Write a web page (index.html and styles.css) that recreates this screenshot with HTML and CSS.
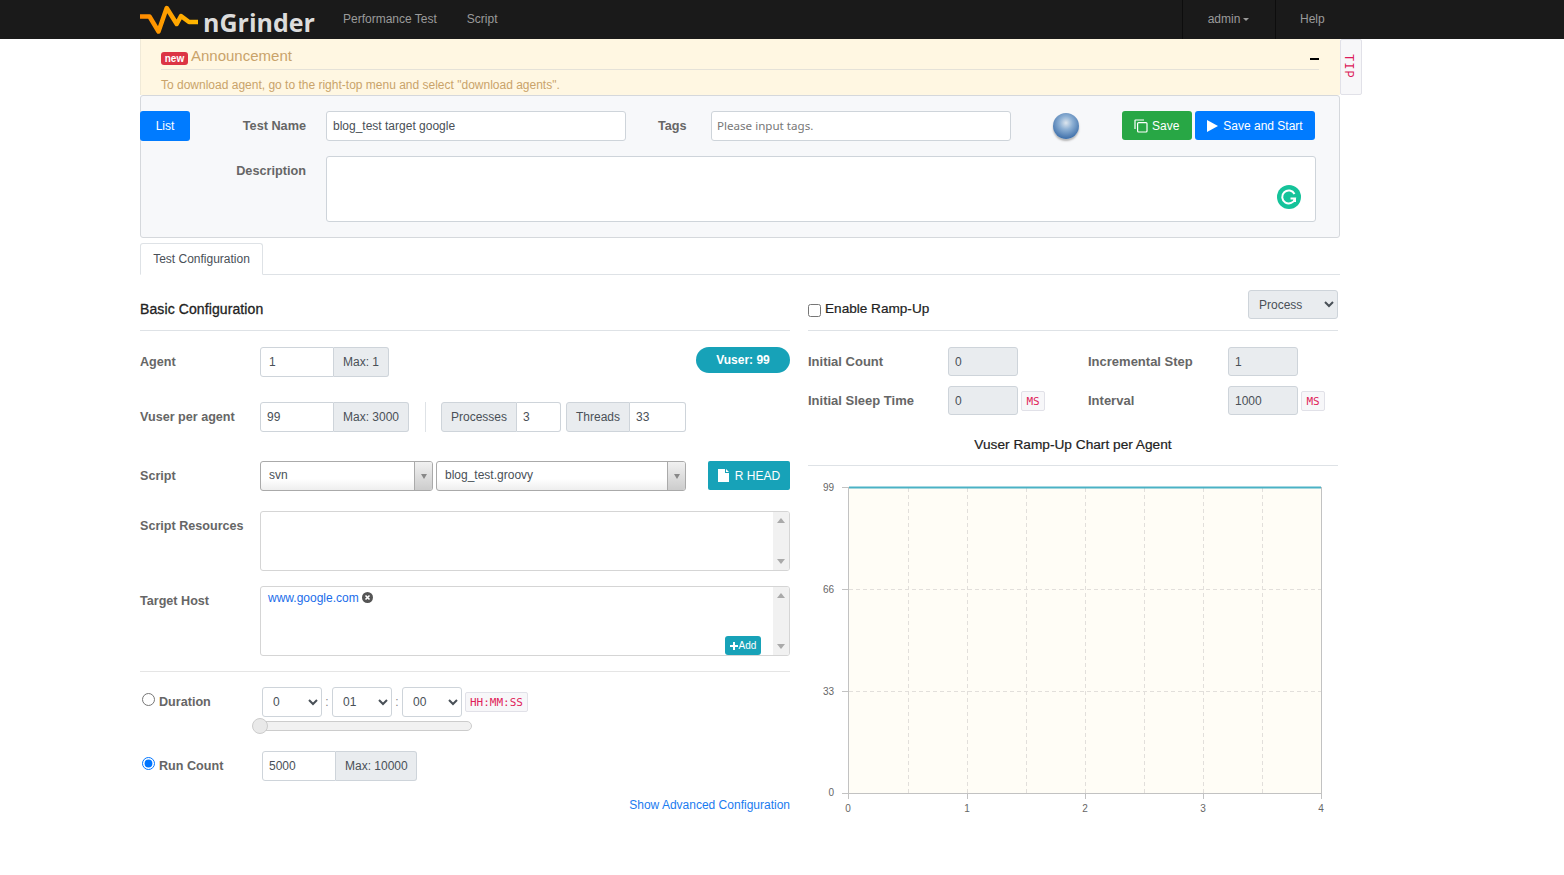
FILE: index.html
```html
<!DOCTYPE html>
<html lang="en">
<head>
<meta charset="utf-8">
<title>nGrinder</title>
<link rel="stylesheet" href="styles.css">
</head>
<body>
<header class="topbar">
  <a class="brand">
    <svg class="brand-mark" width="60" height="39" viewBox="0 0 60 39">
      <defs><linearGradient id="wave" x1="0" x2="1" y1="0" y2="0"><stop offset="0" stop-color="#ff8a00"/><stop offset="1" stop-color="#ffb800"/></linearGradient></defs>
      <path d="M0 16.500H9.500L18.500 31.500 26.700 8 36.700 24 41 16 49 22H58" fill="none" stroke="url(#wave)" stroke-width="4.500" stroke-linejoin="round"/>
    </svg>
    <span class="brand-name">nGrinder</span>
  </a>
  <nav class="nav-left"><a>Performance Test</a><a>Script</a></nav>
  <nav class="nav-right"><a class="nav-user">admin<i class="caret"></i></a><a class="nav-help">Help</a></nav>
</header>

<main class="page">
  <section class="notice">
    <div class="notice-head">
      <span class="badge-new">new</span><span class="notice-title">Announcement</span><span class="notice-min"></span>
    </div>
    <p class="notice-body">To download agent, go to the right-top menu and select "download agents".</p>
    <div class="tip"><span>TIP</span></div>
  </section>

  <section class="well">
    <div class="well-row">
      <button class="btn btn-blue btn-list">List</button>
      <label class="well-label well-label-name">Test Name</label>
      <input class="field field-name" value="blog_test target google">
      <label class="well-label well-label-tags">Tags</label>
      <input class="field field-tags" placeholder="Please input tags.">
      <span class="ball"></span>
      <button class="btn btn-green btn-save"><svg width="14" height="14" viewBox="0 0 14 14"><path d="M1 10V1.500A.5.500 0 0 1 1.500 1H10" fill="none" stroke="#fff" stroke-width="1.200"/><rect x="3.600" y="3.600" width="9.400" height="9.400" rx="1" fill="none" stroke="#fff" stroke-width="1.200"/></svg>Save</button>
      <button class="btn btn-blue btn-start"><svg width="11" height="12" viewBox="0 0 11 12"><path d="M0 0L11 6 0 12Z" fill="#fff"/></svg>Save and Start</button>
    </div>
    <div class="well-row well-row-desc">
      <label class="well-label well-label-desc">Description</label>
      <div class="desc-box">
        <textarea class="desc"></textarea>
        <svg class="grammarly" width="24" height="24" viewBox="0 0 24 24"><circle cx="12" cy="12" r="12" fill="#15c39a"/><path d="M17.500 9A6.500 6.500 0 1 0 18 13.500H13.500" fill="none" stroke="#fff" stroke-width="2"/><path d="M18 13.500V17" stroke="#fff" stroke-width="2"/></svg>
      </div>
    </div>
  </section>

  <div class="tabs"><a class="tab">Test Configuration</a></div>

  <div class="columns">
    <section class="col-left">
      <div class="section-head"><h2>Basic Configuration</h2></div>

      <div class="row row-agent">
        <label class="lbl">Agent</label>
        <div class="group"><input class="gi w74 pl9" value="1"><span class="addon w55">Max: 1</span></div>
        <span class="pill">Vuser: 99</span>
      </div>

      <div class="row row-vuser">
        <label class="lbl">Vuser per agent</label>
        <div class="group"><input class="gi w74" value="99"><span class="addon w75">Max: 3000</span></div>
        <span class="vline"></span>
        <div class="group"><span class="addon addon-first w76">Processes</span><input class="gi gi-last w44" value="3"></div>
        <div class="group group-threads"><span class="addon addon-first w64">Threads</span><input class="gi gi-last w56" value="33"></div>
      </div>

      <div class="row row-script">
        <label class="lbl">Script</label>
        <div class="combo w173"><span>svn</span><i class="combo-arrow"></i></div>
        <div class="combo w250"><span>blog_test.groovy</span><i class="combo-arrow"></i></div>
        <button class="btn btn-teal btn-head"><svg width="11" height="13" viewBox="0 0 11 13"><path d="M0 0H7V4H11V13H0ZM8 0L11 3H8Z" fill="#fff"/></svg>R HEAD</button>
      </div>

      <div class="row row-res">
        <label class="lbl lbl-top">Script Resources</label>
        <div class="listbox h60"><div class="listbody"></div><div class="sb"><i class="sb-up"></i><i class="sb-down"></i></div></div>
      </div>

      <div class="row row-host">
        <label class="lbl lbl-top">Target Host</label>
        <div class="listbox h70">
          <div class="listbody"><a class="hosttag">www.google.com</a><svg class="hostx" width="11" height="11" viewBox="0 0 11 11"><circle cx="5.500" cy="5.500" r="5.500" fill="#555"/><path d="M3.500 3.500L7.500 7.500M7.500 3.500L3.500 7.500" stroke="#fff" stroke-width="1.600"/></svg></div>
          <button class="btn-add"><svg width="8" height="8" viewBox="0 0 8 8"><path d="M3 0H5V3H8V5H5V8H3V5H0V3H3Z" fill="#fff"/></svg>Add</button>
          <div class="sb"><i class="sb-up"></i><i class="sb-down"></i></div>
        </div>
      </div>

      <hr class="rule rule-dur">

      <div class="row row-dur">
        <label class="radio-lbl"><input type="radio" name="mode" class="radio">Duration</label>
        <select class="sel"><option>0</option></select><span class="colon">:</span>
        <select class="sel"><option>01</option></select><span class="colon">:</span>
        <select class="sel"><option>00</option></select>
        <code class="hint hint-hms">HH:MM:SS</code>
      </div>
      <div class="slider"><i class="knob"></i></div>

      <div class="row row-run">
        <label class="radio-lbl"><input type="radio" name="mode" class="radio" checked>Run Count</label>
        <div class="group"><input class="gi w74" value="5000"><span class="addon w81">Max: 10000</span></div>
      </div>

      <div class="adv"><a>Show Advanced Configuration</a></div>
    </section>

    <section class="col-right">
      <div class="section-head head-ramp">
        <label class="ramp-check"><input type="checkbox" class="check">Enable Ramp-Up</label>
        <select class="sel-process"><option>Process</option></select>
      </div>
      <div class="ramp-row ramp-row-1">
        <label class="ramp-lbl">Initial Count</label><input class="ramp-in" value="0" disabled><span class="ramp-gap"></span>
        <label class="ramp-lbl">Incremental Step</label><input class="ramp-in" value="1" disabled>
      </div>
      <div class="ramp-row ramp-row-2">
        <label class="ramp-lbl">Initial Sleep Time</label><input class="ramp-in" value="0" disabled><code class="hint hint-ms">MS</code><span class="ramp-gap ramp-gap-ms"></span>
        <label class="ramp-lbl">Interval</label><input class="ramp-in" value="1000" disabled><code class="hint hint-ms">MS</code>
      </div>
      <h3 class="chart-title">Vuser Ramp-Up Chart per Agent</h3>
      <svg class="chart" width="530" height="350" viewBox="808 475 530 350">
        <rect x="848" y="487" width="473" height="306" fill="#fffdf6"/>
        <g stroke="#e2dfdb" stroke-dasharray="4 3" fill="none">
          <path d="M908.500 488V793M967.500 488V793M1026.500 488V793M1085.500 488V793M1144.500 488V793M1203.500 488V793M1262.500 488V793"/>
          <path d="M849 589.500H1321M849 691.500H1321"/>
        </g>
        <g stroke="#c2c2c2" fill="none">
          <path d="M848.500 487V799M1321.500 487V799M842 793.500H1321M842 487.500H848M842 589.500H848M842 691.500H848"/>
          <path d="M967.500 793V799M1085.500 793V799M1203.500 793V799"/>
        </g>
        <path d="M849 487.500H1321" stroke="#4bb2c5" stroke-width="2" fill="none"/>
        <g class="tick" text-anchor="end">
          <text x="834" y="491">99</text><text x="834" y="593">66</text><text x="834" y="695">33</text><text x="834" y="796">0</text>
        </g>
        <g class="tick" text-anchor="middle">
          <text x="848" y="812">0</text><text x="967" y="812">1</text><text x="1085" y="812">2</text><text x="1203" y="812">3</text><text x="1321" y="812">4</text>
        </g>
      </svg>
    </section>
  </div>
</main>
</body>
</html>
```

FILE: styles.css
```css
* { box-sizing: border-box; }
html, body { margin: 0; padding: 0; background: #fff; }
body { font-family: "Liberation Sans", Arial, sans-serif; font-size: 12px; color: #495057; height: 875px; overflow: hidden; }

.topbar { height: 39px; background: #1a1a1a; display: flex; align-items: stretch; padding-left: 140px; }
.brand { display: flex; align-items: center; width: 203px; }
.brand-mark { flex: none; width: 60px; }
.brand-name { font-family: "Open Sans", sans-serif; font-weight: 700; font-size: 25px; color: #dcdcdc; margin-left: 3px; line-height: 39px; padding-top: 6px; }
.nav-left { display: flex; align-items: center; gap: 30px; color: #9a9a9a; padding-bottom: 1px; }
.nav-right { margin-left: auto; margin-right: 209px; display: flex; color: #9a9a9a; }
.nav-user { width: 94px; border-left: 1px solid #0d0d0d; border-right: 1px solid #0d0d0d; display: flex; align-items: center; justify-content: center; padding-bottom: 1px; padding-right: 1px; }
.nav-help { width: 79px; display: flex; align-items: center; padding-left: 24px; padding-bottom: 1px; }
.caret { border: 3.500px solid transparent; border-top-color: #9a9a9a; border-bottom: 0; margin-left: 3px; }

.page { width: 1200px; margin-left: 140px; }

.notice { position: relative; height: 56px; background: #fff7e2; border-left: 1px solid #f0ead8; padding: 0 21px 0 20px; color: #c9a36a; }
.notice-head { height: 31px; border-bottom: 1px solid #e5e2d8; display: flex; align-items: center; }
.badge-new { background: #dc3545; color: #fff; font-size: 10px; font-weight: 700; border-radius: 3px; width: 27px; height: 13px; line-height: 13px; text-align: center; margin-top: 8px; }
.notice-title { font-size: 15px; margin-left: 3px; margin-top: 3px; }
.notice-min { margin-left: auto; width: 9px; height: 2px; background: #000; margin-top: 9px; }
.notice-body { margin: 8px 0 0; font-size: 12px; line-height: 14px; }
.tip { position: absolute; left: 100%; top: 0; width: 22px; height: 56px; background: #f7f7f9; border: 1px solid #e1e1e8; border-radius: 2px; display: flex; justify-content: center; padding: 14px 6px 0 0; }
.tip span { writing-mode: vertical-rl; font-family: "Liberation Mono", monospace; font-size: 12px; color: #dc1a5a; line-height: 1; letter-spacing: 1px; }

.well { height: 143px; background: #f7f8fa; border: 1px solid #d5d8dc; border-radius: 3px; padding-top: 15px; margin-left: 0; }
.well-row { display: flex; align-items: flex-start; height: 30px; margin-left: -1px; }
.well-row-desc { margin-top: 15px; height: 66px; }
.well-label { font-size: 12.700px; font-weight: 700; color: #666; line-height: 30px; }
.well-label-name { width: 116px; text-align: right; }
.well-label-tags { margin-left: 32px; width: 53px; }
.well-label-desc { text-align: right; width: 166px; }
.field { height: 30px; background: #fff; border: 1px solid #ced4da; border-radius: 3px; font: inherit; color: #495057; padding: 0 6px; }
.field::placeholder { color: #777; font-family: "Noto Sans", sans-serif; font-size: 11.600px; }
.field-name { width: 300px; margin-left: 20px; }
.field-tags { width: 300px; padding-left: 5px; }
.ball { width: 26px; height: 26px; margin: 2px 43px 0 42px; border-radius: 50%; flex: none; background: radial-gradient(circle at 50% 38%, #dde6ee 0, #8db0d4 32%, #3d6ea9 78%, #5a82b8 100%); box-shadow: 0 2px 2px #b5b5b5; }
.btn { border: 0; border-radius: 3px; color: #fff; font: inherit; display: flex; align-items: center; justify-content: center; padding: 0; }
.btn-blue { background: #007bff; }
.btn-green { background: #28a745; }
.btn-teal { background: #17a2b8; }
.btn-list { width: 50px; height: 30px; }
.btn-save { width: 70px; height: 29px; gap: 4px; justify-content: flex-start; padding-left: 12px; }
.btn-start { width: 120px; height: 29px; margin-left: 3px; gap: 5px; }
.desc-box { position: relative; margin-left: 20px; width: 990px; height: 66px; }
.desc { display: block; width: 100%; height: 100%; border: 1px solid #ced4da; border-radius: 3px; background: #fff; resize: none; }
.grammarly { position: absolute; right: 15px; bottom: 13px; }

.tabs { margin-top: 5px; height: 32px; border-bottom: 1px solid #dee2e6; }
.tab { display: block; width: 123px; height: 32px; border: 1px solid #dee2e6; border-bottom-color: #fff; background: #fff; line-height: 30px; text-align: center; border-radius: 3px 3px 0 0; }

.columns { display: flex; gap: 18px; }
.col-left { width: 650px; }
.col-right { width: 530px; }
.section-head { height: 56px; border-bottom: 1px solid #dee2e6; display: flex; align-items: flex-end; }
.section-head h2 { margin: 0 0 11px; font-size: 14px; font-weight: 400; color: #222; -webkit-text-stroke: .3px #222; letter-spacing: .1px; line-height: 20px; }

.row { display: flex; align-items: flex-start; }
.lbl { width: 120px; font-size: 12.600px; font-weight: 700; color: #666; line-height: 30px; flex: none; }
.row-agent { margin-top: 16px; height: 30px; }
.row-vuser { margin-top: 25px; height: 30px; }
.row-script { margin-top: 29px; height: 30px; }
.row-res { margin-top: 20px; height: 60px; }
.row-host { margin-top: 15px; height: 70px; }
.lbl-top { line-height: 30px; }

.group { display: flex; height: 30px; }
.group-threads { margin-left: 5px; }
.gi { height: 30px; border: 1px solid #ced4da; border-radius: 3px 0 0 3px; background: #fff; font: inherit; color: #495057; padding: 0 6px; }
.gi-last { border-radius: 0 3px 3px 0; border-left: 0; }
.pl9 { padding-left: 8px; }
.addon { height: 30px; background: #e9ecef; border: 1px solid #ced4da; border-left: 0; border-radius: 0 3px 3px 0; display: flex; align-items: center; padding-left: 9px; flex: none; white-space: nowrap; }
.addon-first { border-left: 1px solid #ced4da; border-radius: 3px 0 0 3px; }
.w74 { width: 74px; } .w55 { width: 55px; } .w75 { width: 75px; } .w76 { width: 76px; } .w44 { width: 44px; } .w64 { width: 64px; } .w56 { width: 56px; } .w81 { width: 81px; }
.pill { margin-left: auto; width: 94px; height: 26px; border-radius: 13px; background: #17a2b8; color: #fff; font-weight: 700; display: flex; align-items: center; justify-content: center; padding-bottom: 1px; }
.vline { width: 1px; height: 30px; background: #dee2e6; margin: 0 15px 0 16px; }
.combo { height: 30px; border: 1px solid #aaa; border-radius: 3px; background: linear-gradient(#fff 60%, #eee); display: flex; align-items: center; padding-left: 8px; position: relative; }
.combo span { margin-top: -2px; }
.w173 { width: 173px; }
.w250 { width: 250px; margin-left: 3px; }
.combo-arrow { margin-left: auto; width: 18px; height: 28px; background: linear-gradient(#f1f1f1, #ccc); border-left: 1px solid #aaa; border-radius: 0 2px 2px 0; display: flex; align-items: center; justify-content: center; }
.combo-arrow::after { content: ""; border: 3.500px solid transparent; border-top: 5px solid #888; border-bottom: 0; }
.btn-head { margin-left: auto; width: 82px; height: 29px; font-size: 12px; gap: 6px; border-radius: 2px; }

.listbox { flex: 1; border: 1px solid #d5d5d5; border-radius: 3px; display: flex; position: relative; overflow: hidden; }
.h60 { height: 60px; } .h70 { height: 70px; }
.listbody { flex: 1; padding: 4px 7px; line-height: 14px; display: flex; align-items: flex-start; }
.hosttag { color: #1a6dea; }
.hostx { margin: 1px 0 0 3px; }
.sb { width: 16px; background: #f1f1f1; display: flex; flex-direction: column; justify-content: space-between; align-items: center; padding: 6px 0; }
.sb-up { border: 4px solid transparent; border-bottom: 5px solid #aaa; border-top: 0; }
.sb-down { border: 4px solid transparent; border-top: 5px solid #aaa; border-bottom: 0; }
.btn-add { position: absolute; right: 28px; bottom: 0; width: 36px; height: 19px; border: 0; padding: 0; border-radius: 3px; background: #17a2b8; color: #fff; font: 400 10px "Liberation Sans", sans-serif; display: flex; align-items: center; justify-content: center; gap: 1px; }

.rule { border: 0; border-top: 1px solid #e5e5e5; margin: 0; }
.rule-dur { margin-top: 15px; }
.radio-lbl { width: 122px; flex: none; font-size: 12.600px; font-weight: 700; color: #666; line-height: 30px; display: flex; align-items: center; }
.radio { margin: 0 4px 0 2px; width: 13px; height: 13px; position: relative; top: -3px; }
.row-dur { margin-top: 15px; height: 30px; }
.sel { width: 60px; height: 30px; border: 1px solid #ced4da; border-radius: 3px; background: #fff; font: inherit; color: #495057; padding-left: 6px; }
.colon { width: 10px; text-align: center; line-height: 31px; color: #888; }
.hint { font-family: "DejaVu Sans Mono", monospace; font-size: 11px; color: #e01e5a; background: #f7f7f9; border: 1px solid #e1e1e8; border-radius: 2px; display: flex; align-items: center; justify-content: center; height: 20px; }
.hint-hms { width: 63px; margin: 5px 0 0 3px; }
.hint-ms { width: 24px; margin: 5px 0 0 3px; }
.slider { width: 212px; height: 10px; margin: 4px 0 0 120px; background: #f1f1f1; border: 1px solid #ccc; border-radius: 5px; position: relative; }
.knob { position: absolute; left: -9px; top: -4px; width: 16px; height: 16px; border-radius: 50%; background: #e9e9e9; border: 1px solid #ccc; }
.row-run { margin-top: 20px; height: 30px; }
.adv { margin-top: 16px; text-align: right; color: #1a7bf0; line-height: 16px; }

.head-ramp { justify-content: space-between; align-items: flex-start; }
.ramp-check { display: flex; align-items: center; margin-top: 24px; font-size: 13.600px; color: #222; line-height: 20px; -webkit-text-stroke: .2px #222; }
.check { width: 13px; height: 13px; margin: 3px 4px 0 0; }
.sel-process { width: 90px; height: 29px; margin-top: 15px; border: 1px solid #ced4da; border-radius: 3px; background: #e9ecef; font: inherit; color: #495057; padding-left: 6px; }
.ramp-row { display: flex; align-items: flex-start; height: 29px; }
.ramp-row-1 { margin-top: 16px; }
.ramp-row-2 { margin-top: 10px; }
.ramp-lbl { width: 140px; flex: none; font-size: 13px; font-weight: 700; color: #666; line-height: 29px; }
.ramp-in { width: 70px; height: 29px; border: 1px solid #ced4da; border-radius: 3px; background: #e9ecef; font: inherit; color: #495057; padding: 0 6px; flex: none; }
.ramp-gap { width: 70px; flex: none; }
.ramp-gap-ms { width: 43px; }
.chart-title { margin: 20px 0 0; height: 31px; border-bottom: 1px solid #dee2e6; text-align: center; font-size: 13.700px; font-weight: 400; color: #222; line-height: 20px; -webkit-text-stroke: .2px #222; }
.chart { display: block; margin-top: 9px; }
.tick { font-size: 10px; fill: #666; }
```
